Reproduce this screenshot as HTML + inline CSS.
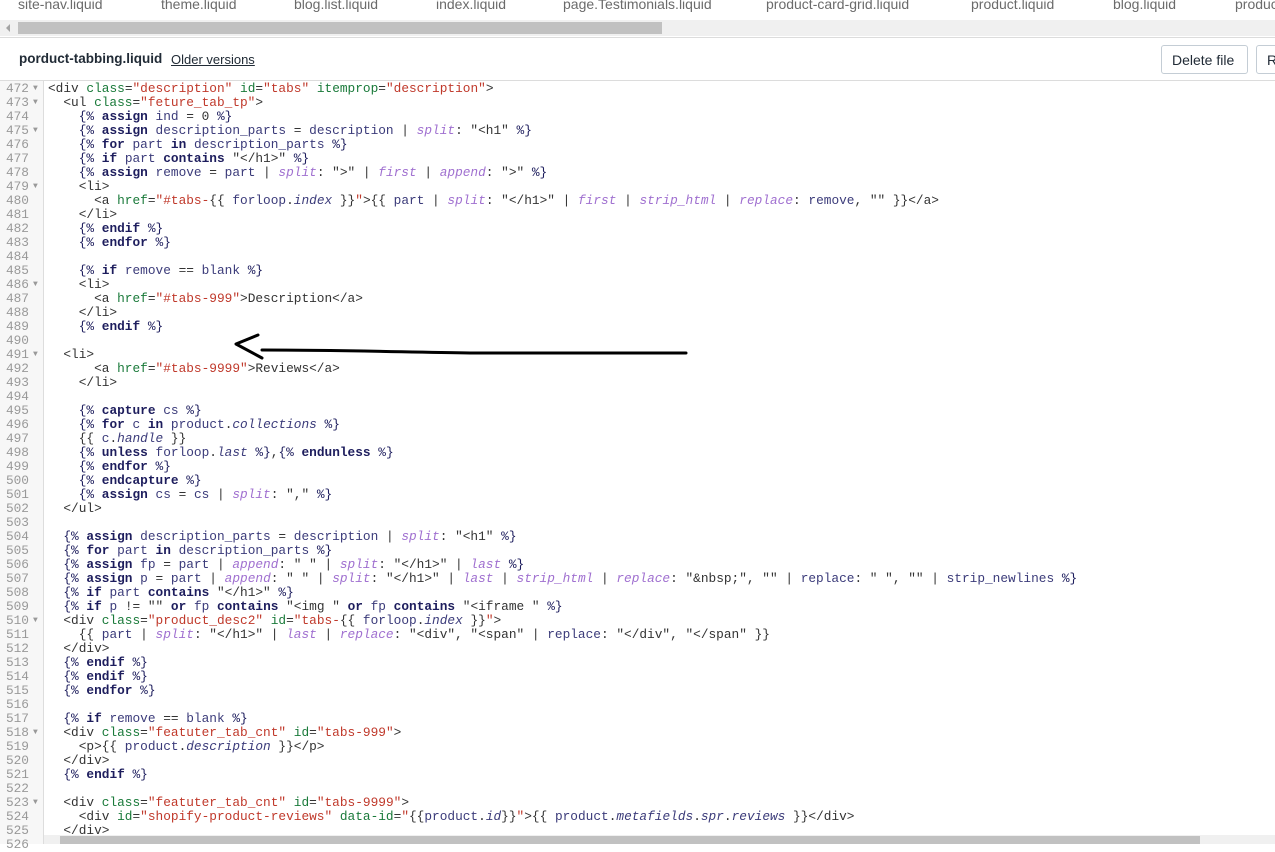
<!DOCTYPE html>
<html><head><meta charset="utf-8"><style>
*{margin:0;padding:0;box-sizing:border-box}
body{width:1275px;height:844px;overflow:hidden;background:#fff;font-family:"Liberation Sans",sans-serif;position:relative}
.tabs{position:absolute;top:-4px;left:0;height:18px;font-size:14px;color:#6b6b6b;white-space:nowrap}
.tabs span{position:absolute;top:0}
.hs{position:absolute;top:20px;left:0;width:1275px;height:16px;background:#f0f0f0}
.hs .th{position:absolute;left:18px;top:2px;width:644px;height:12px;background:#c1c1c1}
.hs .ar{position:absolute;left:6px;top:4px;width:0;height:0;border-top:4px solid transparent;border-bottom:4px solid transparent;border-right:4px solid #a3a3a3}
.sep{position:absolute;left:0;width:1275px;height:1px;background:#dcdcdc}
.title{position:absolute;top:51px;left:19px;font-size:13.5px;font-weight:bold;color:#212b36}
.older{position:absolute;top:52px;left:171px;font-size:13px;color:#212b36;text-decoration:underline}
.btn{position:absolute;top:45px;height:29px;border:1px solid #c4cdd5;border-radius:3px;font-size:14px;color:#212b36;padding:6px 10px;background:#fff}
.gut{position:absolute;top:81px;left:0;width:44px;height:763px;background:#f7f7f7;border-right:1px solid #ddd}
pre{position:absolute;top:82px;left:0;font-family:"Liberation Mono",monospace;font-size:12.8px;line-height:14px;color:#333}
.ln{display:inline-block;width:29px;text-align:right;color:#999}
.fd{display:inline-block;width:19px;color:#999;font-size:8px;padding-left:4px;vertical-align:top}
.k{color:#1d1d5d;font-weight:bold}.v{color:#3b3b7a}.f{color:#a070d0;font-style:italic}.s{color:#c0392b}.a{color:#1a7a3a}.b{color:#1d1d5d}.i{font-style:italic;color:#3b3b7a}
.bs{position:absolute;top:835px;left:44px;width:1231px;height:9px;background:#f0f0f0}
.bs .th{position:absolute;left:16px;top:1px;width:1140px;height:8px;background:#c1c1c1}
</style></head><body>
<div class="tabs"><span style="left:18px">site-nav.liquid</span><span style="left:161px">theme.liquid</span><span style="left:294px">blog.list.liquid</span><span style="left:436px">index.liquid</span><span style="left:563px">page.Testimonials.liquid</span><span style="left:766px">product-card-grid.liquid</span><span style="left:971px">product.liquid</span><span style="left:1113px">blog.liquid</span><span style="left:1235px">product</span></div>
<div class="hs"><div class="ar"></div><div class="th"></div></div>
<div class="sep" style="top:37px"></div>
<div class="title">porduct-tabbing.liquid</div>
<div class="older">Older versions</div>
<div class="btn" style="left:1161px;width:87px">Delete file</div>
<div class="btn" style="left:1256px;width:40px">R</div>
<div class="sep" style="top:80px"></div>
<div class="gut"></div>
<pre><span class="ln">472</span><span class="fd">▼</span>&lt;div <span class="a">class</span>=<span class="s">"description"</span> <span class="a">id</span>=<span class="s">"tabs"</span> <span class="a">itemprop</span>=<span class="s">"description"</span>&gt;
<span class="ln">473</span><span class="fd">▼</span>  &lt;ul <span class="a">class</span>=<span class="s">"feture_tab_tp"</span>&gt;
<span class="ln">474</span><span class="fd"></span>    <span class="b">{%</span> <span class="k">assign</span> <span class="v">ind</span> = 0 <span class="b">%}</span>
<span class="ln">475</span><span class="fd">▼</span>    <span class="b">{%</span> <span class="k">assign</span> <span class="v">description_parts</span> = <span class="v">description</span> | <span class="f">split</span>: "&lt;h1" <span class="b">%}</span>
<span class="ln">476</span><span class="fd"></span>    <span class="b">{%</span> <span class="k">for</span> <span class="v">part</span> <span class="k">in</span> <span class="v">description_parts</span> <span class="b">%}</span>
<span class="ln">477</span><span class="fd"></span>    <span class="b">{%</span> <span class="k">if</span> <span class="v">part</span> <span class="k">contains</span> "&lt;/h1&gt;" <span class="b">%}</span>
<span class="ln">478</span><span class="fd"></span>    <span class="b">{%</span> <span class="k">assign</span> <span class="v">remove</span> = <span class="v">part</span> | <span class="f">split</span>: "&gt;" | <span class="f">first</span> | <span class="f">append</span>: "&gt;" <span class="b">%}</span>
<span class="ln">479</span><span class="fd">▼</span>    &lt;li&gt;
<span class="ln">480</span><span class="fd"></span>      &lt;a <span class="a">href</span>=<span class="s">"#tabs-</span>{{ <span class="v">forloop</span>.<span class="i">index</span> }}<span class="s">"</span>&gt;{{ <span class="v">part</span> | <span class="f">split</span>: "&lt;/h1&gt;" | <span class="f">first</span> | <span class="f">strip_html</span> | <span class="f">replace</span>: <span class="v">remove</span>, "" }}&lt;/a&gt;
<span class="ln">481</span><span class="fd"></span>    &lt;/li&gt;
<span class="ln">482</span><span class="fd"></span>    <span class="b">{%</span> <span class="k">endif</span> <span class="b">%}</span>
<span class="ln">483</span><span class="fd"></span>    <span class="b">{%</span> <span class="k">endfor</span> <span class="b">%}</span>
<span class="ln">484</span><span class="fd"></span>
<span class="ln">485</span><span class="fd"></span>    <span class="b">{%</span> <span class="k">if</span> <span class="v">remove</span> == <span class="v">blank</span> <span class="b">%}</span>
<span class="ln">486</span><span class="fd">▼</span>    &lt;li&gt;
<span class="ln">487</span><span class="fd"></span>      &lt;a <span class="a">href</span>=<span class="s">"#tabs-999"</span>&gt;Description&lt;/a&gt;
<span class="ln">488</span><span class="fd"></span>    &lt;/li&gt;
<span class="ln">489</span><span class="fd"></span>    <span class="b">{%</span> <span class="k">endif</span> <span class="b">%}</span>
<span class="ln">490</span><span class="fd"></span>
<span class="ln">491</span><span class="fd">▼</span>  &lt;li&gt;
<span class="ln">492</span><span class="fd"></span>      &lt;a <span class="a">href</span>=<span class="s">"#tabs-9999"</span>&gt;Reviews&lt;/a&gt;
<span class="ln">493</span><span class="fd"></span>    &lt;/li&gt;
<span class="ln">494</span><span class="fd"></span>
<span class="ln">495</span><span class="fd"></span>    <span class="b">{%</span> <span class="k">capture</span> <span class="v">cs</span> <span class="b">%}</span>
<span class="ln">496</span><span class="fd"></span>    <span class="b">{%</span> <span class="k">for</span> <span class="v">c</span> <span class="k">in</span> <span class="v">product</span>.<span class="i">collections</span> <span class="b">%}</span>
<span class="ln">497</span><span class="fd"></span>    {{ <span class="v">c</span>.<span class="i">handle</span> }}
<span class="ln">498</span><span class="fd"></span>    <span class="b">{%</span> <span class="k">unless</span> <span class="v">forloop</span>.<span class="i">last</span> <span class="b">%}</span>,<span class="b">{%</span> <span class="k">endunless</span> <span class="b">%}</span>
<span class="ln">499</span><span class="fd"></span>    <span class="b">{%</span> <span class="k">endfor</span> <span class="b">%}</span>
<span class="ln">500</span><span class="fd"></span>    <span class="b">{%</span> <span class="k">endcapture</span> <span class="b">%}</span>
<span class="ln">501</span><span class="fd"></span>    <span class="b">{%</span> <span class="k">assign</span> <span class="v">cs</span> = <span class="v">cs</span> | <span class="f">split</span>: "," <span class="b">%}</span>
<span class="ln">502</span><span class="fd"></span>  &lt;/ul&gt;
<span class="ln">503</span><span class="fd"></span>
<span class="ln">504</span><span class="fd"></span>  <span class="b">{%</span> <span class="k">assign</span> <span class="v">description_parts</span> = <span class="v">description</span> | <span class="f">split</span>: "&lt;h1" <span class="b">%}</span>
<span class="ln">505</span><span class="fd"></span>  <span class="b">{%</span> <span class="k">for</span> <span class="v">part</span> <span class="k">in</span> <span class="v">description_parts</span> <span class="b">%}</span>
<span class="ln">506</span><span class="fd"></span>  <span class="b">{%</span> <span class="k">assign</span> <span class="v">fp</span> = <span class="v">part</span> | <span class="f">append</span>: " " | <span class="f">split</span>: "&lt;/h1&gt;" | <span class="f">last</span> <span class="b">%}</span>
<span class="ln">507</span><span class="fd"></span>  <span class="b">{%</span> <span class="k">assign</span> <span class="v">p</span> = <span class="v">part</span> | <span class="f">append</span>: " " | <span class="f">split</span>: "&lt;/h1&gt;" | <span class="f">last</span> | <span class="f">strip_html</span> | <span class="f">replace</span>: "&amp;nbsp;", "" | <span class="v">replace</span>: " ", "" | <span class="v">strip_newlines</span> <span class="b">%}</span>
<span class="ln">508</span><span class="fd"></span>  <span class="b">{%</span> <span class="k">if</span> <span class="v">part</span> <span class="k">contains</span> "&lt;/h1&gt;" <span class="b">%}</span>
<span class="ln">509</span><span class="fd"></span>  <span class="b">{%</span> <span class="k">if</span> <span class="v">p</span> != "" <span class="k">or</span> <span class="v">fp</span> <span class="k">contains</span> "&lt;img " <span class="k">or</span> <span class="v">fp</span> <span class="k">contains</span> "&lt;iframe " <span class="b">%}</span>
<span class="ln">510</span><span class="fd">▼</span>  &lt;div <span class="a">class</span>=<span class="s">"product_desc2"</span> <span class="a">id</span>=<span class="s">"tabs-</span>{{ <span class="v">forloop</span>.<span class="i">index</span> }}<span class="s">"</span>&gt;
<span class="ln">511</span><span class="fd"></span>    {{ <span class="v">part</span> | <span class="f">split</span>: "&lt;/h1&gt;" | <span class="f">last</span> | <span class="f">replace</span>: "&lt;div", "&lt;span" | <span class="v">replace</span>: "&lt;/div", "&lt;/span" }}
<span class="ln">512</span><span class="fd"></span>  &lt;/div&gt;
<span class="ln">513</span><span class="fd"></span>  <span class="b">{%</span> <span class="k">endif</span> <span class="b">%}</span>
<span class="ln">514</span><span class="fd"></span>  <span class="b">{%</span> <span class="k">endif</span> <span class="b">%}</span>
<span class="ln">515</span><span class="fd"></span>  <span class="b">{%</span> <span class="k">endfor</span> <span class="b">%}</span>
<span class="ln">516</span><span class="fd"></span>
<span class="ln">517</span><span class="fd"></span>  <span class="b">{%</span> <span class="k">if</span> <span class="v">remove</span> == <span class="v">blank</span> <span class="b">%}</span>
<span class="ln">518</span><span class="fd">▼</span>  &lt;div <span class="a">class</span>=<span class="s">"featuter_tab_cnt"</span> <span class="a">id</span>=<span class="s">"tabs-999"</span>&gt;
<span class="ln">519</span><span class="fd"></span>    &lt;p&gt;{{ <span class="v">product</span>.<span class="i">description</span> }}&lt;/p&gt;
<span class="ln">520</span><span class="fd"></span>  &lt;/div&gt;
<span class="ln">521</span><span class="fd"></span>  <span class="b">{%</span> <span class="k">endif</span> <span class="b">%}</span>
<span class="ln">522</span><span class="fd"></span>
<span class="ln">523</span><span class="fd">▼</span>  &lt;div <span class="a">class</span>=<span class="s">"featuter_tab_cnt"</span> <span class="a">id</span>=<span class="s">"tabs-9999"</span>&gt;
<span class="ln">524</span><span class="fd"></span>    &lt;div <span class="a">id</span>=<span class="s">"shopify-product-reviews"</span> <span class="a">data-id</span>=<span class="s">"</span>{{<span class="v">product</span>.<span class="i">id</span>}}<span class="s">"</span>&gt;{{ <span class="v">product</span>.<span class="i">metafields</span>.<span class="i">spr</span>.<span class="i">reviews</span> }}&lt;/div&gt;
<span class="ln">525</span><span class="fd"></span>  &lt;/div&gt;
<span class="ln">526</span><span class="fd"></span></pre>
<div class="bs"><div class="th"></div></div>
<svg style="position:absolute;left:0;top:0" width="1275" height="844"><g fill="none" stroke="#000" stroke-width="3" stroke-linecap="round" stroke-linejoin="round"><path d="M258 335 L236 344 L262 358"/><path d="M262 350 C340 350 400 352 470 353 L686 353"/></g></svg>
</body></html>
